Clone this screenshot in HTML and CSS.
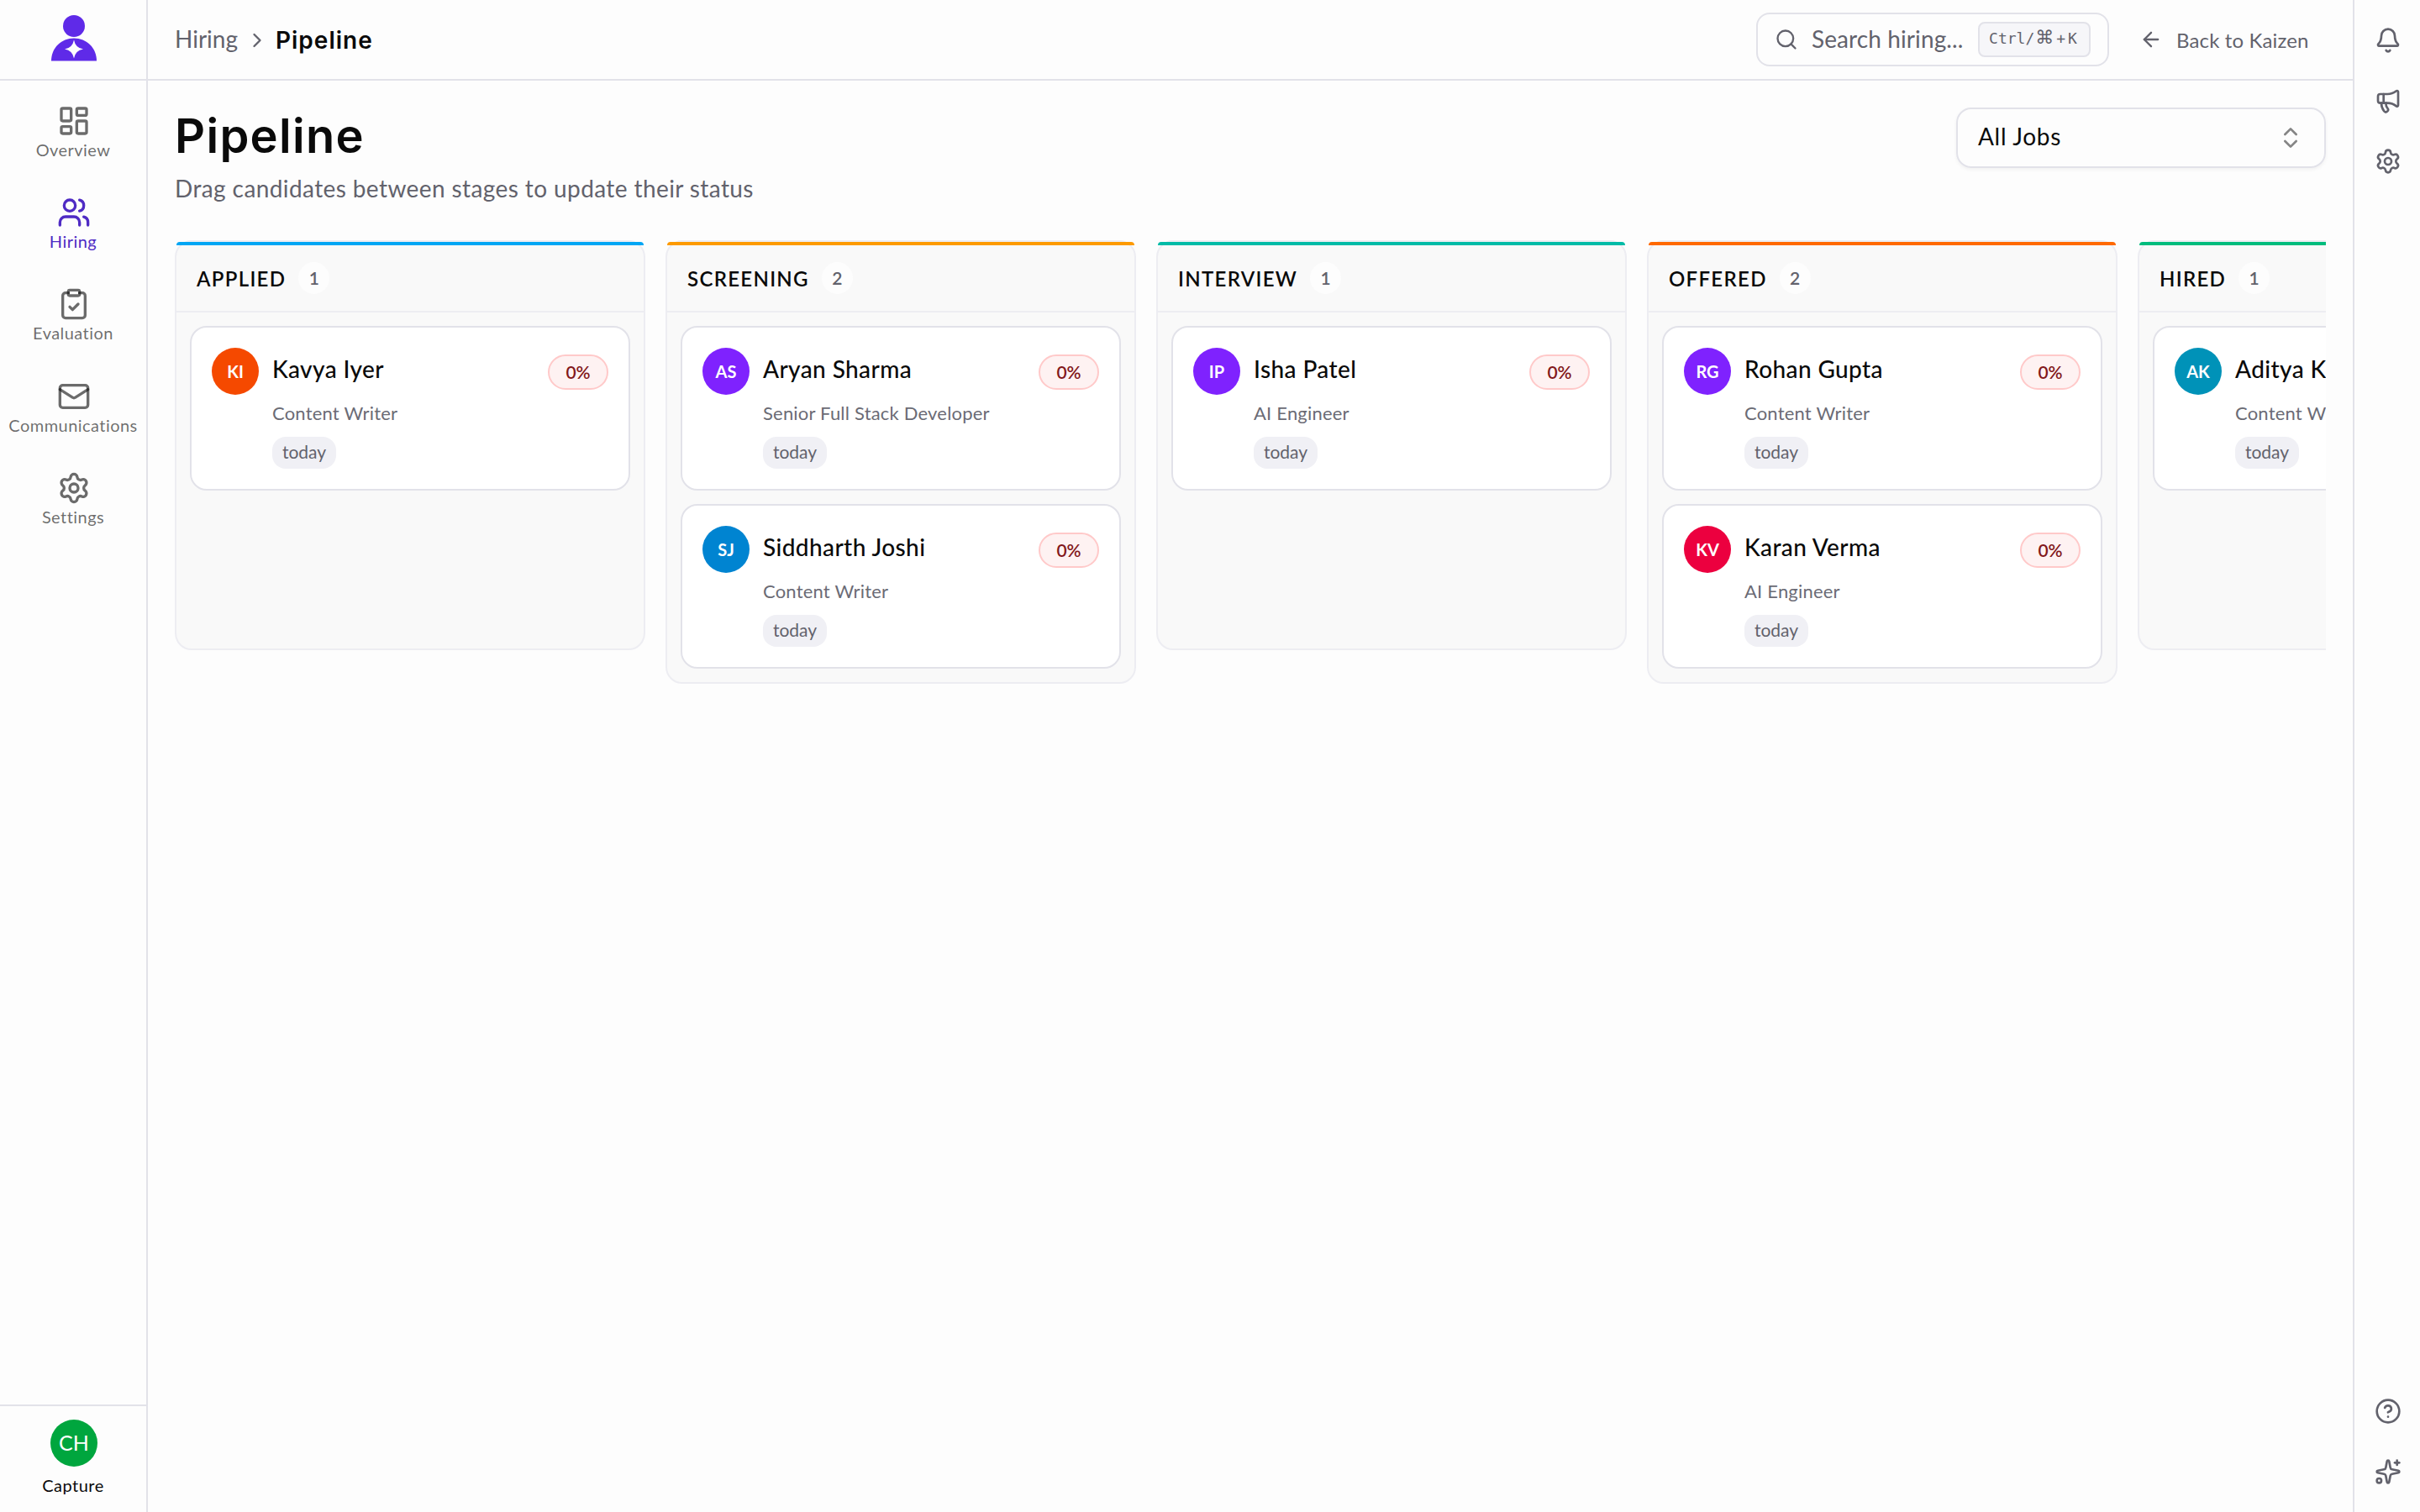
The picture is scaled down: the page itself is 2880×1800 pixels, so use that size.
FILE: index.html
```html
<!DOCTYPE html>
<html lang="en">
<head>
    <meta charset="UTF-8">
    <meta name="viewport" content="width=device-width, initial-scale=1.0">
    <title>Pipeline</title>
    <link rel="stylesheet" href="styles.css">
</head>
<body>
    <!-- Shared icons -->
    <svg class="icon-defs">
        <symbol id="settings" viewBox="0 0 24 24">
            <path d="M9.671 4.136a2.34 2.34 0 0 1 4.659 0 2.34 2.34 0 0 0 3.319 1.915 2.34 2.34 0 0 1 2.33 4.033 2.34 2.34 0 0 0 0 3.831 2.34 2.34 0 0 1-2.33 4.033 2.34 2.34 0 0 0-3.319 1.915 2.34 2.34 0 0 1-4.659 0 2.34 2.34 0 0 0-3.32-1.915 2.34 2.34 0 0 1-2.33-4.033 2.34 2.34 0 0 0 0-3.831A2.34 2.34 0 0 1 6.35 6.051a2.34 2.34 0 0 0 3.319-1.915"/>
            <circle cx="12" cy="12" r="3"/>
        </symbol>
    </svg>

    <div class="app">
        <aside class="sidebar">
            <div class="logo">
                <svg width="56" height="56" viewBox="0 0 56 56">
                    <circle cx="28" cy="14" r="13" fill="#5f2ae8"/>
                    <path d="M1 55.500C1 40 13 28.500 28 28.500S55 40 55 55.500Z" fill="#5f2ae8"/>
                    <path d="M28 30.500Q29.700 40 39 41.500Q29.700 43 28 52.500Q26.300 43 17 41.500Q26.300 40 28 30.500Z" fill="#fdfdfd"/>
                </svg>
            </div>
            <nav class="nav">
                <a class="nav-item">
                    <svg class="icon" viewBox="0 0 24 24"><rect width="7" height="9" x="3" y="3" rx="1"/><rect width="7" height="5" x="14" y="3" rx="1"/><rect width="7" height="9" x="14" y="12" rx="1"/><rect width="7" height="5" x="3" y="16" rx="1"/></svg>
                    <span>Overview</span>
                </a>
                <a class="nav-item active">
                    <svg class="icon" viewBox="0 0 24 24"><path d="M16 21v-2a4 4 0 0 0-4-4H6a4 4 0 0 0-4 4v2"/><circle cx="9" cy="7" r="4"/><path d="M22 21v-2a4 4 0 0 0-3-3.870"/><path d="M16 3.130a4 4 0 0 1 0 7.750"/></svg>
                    <span>Hiring</span>
                </a>
                <a class="nav-item">
                    <svg class="icon" viewBox="0 0 24 24"><rect width="8" height="4" x="8" y="2" rx="1"/><path d="M16 4h2a2 2 0 0 1 2 2v14a2 2 0 0 1-2 2H6a2 2 0 0 1-2-2V6a2 2 0 0 1 2-2h2"/><path d="m9 14 2 2 4-4"/></svg>
                    <span>Evaluation</span>
                </a>
                <a class="nav-item">
                    <svg class="icon" viewBox="0 0 24 24"><rect width="20" height="16" x="2" y="4" rx="2"/><path d="m22 7-8.970 5.700a1.940 1.940 0 0 1-2.060 0L2 7"/></svg>
                    <span>Communications</span>
                </a>
                <a class="nav-item">
                    <svg class="icon"><use href="#settings"/></svg>
                    <span>Settings</span>
                </a>
            </nav>
            <div class="account">
                <div class="account-avatar">CH</div>
                <span>Capture</span>
            </div>
        </aside>

        <div class="content">
            <header class="topbar">
                <div class="breadcrumb">
                    <span class="crumb">Hiring</span>
                    <svg class="icon crumb-arrow" viewBox="0 0 24 24"><path d="m9 18 6-6-6-6"/></svg>
                    <span class="crumb-current">Pipeline</span>
                </div>
                <div class="search">
                    <svg class="icon" viewBox="0 0 24 24"><circle cx="11" cy="11" r="8"/><path d="m21 21-4.340-4.340"/></svg>
                    <span class="search-text">Search hiring...</span>
                    <kbd><span>Ctrl/</span><span class="cmd">⌘</span><span class="plus-k">+K</span></kbd>
                </div>
                <a class="back-link">
                    <svg class="icon" viewBox="0 0 24 24"><path d="m12 19-7-7 7-7"/><path d="M19 12H5"/></svg>
                    <span>Back to Kaizen</span>
                </a>
            </header>

            <main class="main">
                <div class="page-header">
                    <div>
                        <h1>Pipeline</h1>
                        <p>Drag candidates between stages to update their status</p>
                    </div>
                    <div class="select">
                        <span>All Jobs</span>
                        <svg class="icon" viewBox="0 0 24 24"><path d="m7 15 5 5 5-5"/><path d="m7 9 5-5 5 5"/></svg>
                    </div>
                </div>

                <div class="board">
                    <section class="column">
                        <div class="bar sky"></div>
                        <div class="column-header"><h2>APPLIED</h2><span class="count">1</span></div>
                        <div class="column-body">
                            <div class="card">
                                <div class="avatar orange">KI</div>
                                <div class="info">
                                    <div class="info-top"><span class="name">Kavya Iyer</span><span class="score">0%</span></div>
                                    <div class="role">Content Writer</div>
                                    <span class="tag">today</span>
                                </div>
                            </div>
                        </div>
                    </section>

                    <section class="column">
                        <div class="bar amber"></div>
                        <div class="column-header"><h2>SCREENING</h2><span class="count">2</span></div>
                        <div class="column-body">
                            <div class="card">
                                <div class="avatar violet">AS</div>
                                <div class="info">
                                    <div class="info-top"><span class="name">Aryan Sharma</span><span class="score">0%</span></div>
                                    <div class="role">Senior Full Stack Developer</div>
                                    <span class="tag">today</span>
                                </div>
                            </div>
                            <div class="card">
                                <div class="avatar blue">SJ</div>
                                <div class="info">
                                    <div class="info-top"><span class="name">Siddharth Joshi</span><span class="score">0%</span></div>
                                    <div class="role">Content Writer</div>
                                    <span class="tag">today</span>
                                </div>
                            </div>
                        </div>
                    </section>

                    <section class="column">
                        <div class="bar teal"></div>
                        <div class="column-header"><h2>INTERVIEW</h2><span class="count">1</span></div>
                        <div class="column-body">
                            <div class="card">
                                <div class="avatar violet">IP</div>
                                <div class="info">
                                    <div class="info-top"><span class="name">Isha Patel</span><span class="score">0%</span></div>
                                    <div class="role">AI Engineer</div>
                                    <span class="tag">today</span>
                                </div>
                            </div>
                        </div>
                    </section>

                    <section class="column">
                        <div class="bar deep-orange"></div>
                        <div class="column-header"><h2>OFFERED</h2><span class="count">2</span></div>
                        <div class="column-body">
                            <div class="card">
                                <div class="avatar violet">RG</div>
                                <div class="info">
                                    <div class="info-top"><span class="name">Rohan Gupta</span><span class="score">0%</span></div>
                                    <div class="role">Content Writer</div>
                                    <span class="tag">today</span>
                                </div>
                            </div>
                            <div class="card">
                                <div class="avatar rose">KV</div>
                                <div class="info">
                                    <div class="info-top"><span class="name">Karan Verma</span><span class="score">0%</span></div>
                                    <div class="role">AI Engineer</div>
                                    <span class="tag">today</span>
                                </div>
                            </div>
                        </div>
                    </section>

                    <section class="column">
                        <div class="bar green"></div>
                        <div class="column-header"><h2>HIRED</h2><span class="count">1</span></div>
                        <div class="column-body">
                            <div class="card">
                                <div class="avatar cyan">AK</div>
                                <div class="info">
                                    <div class="info-top"><span class="name">Aditya Kumar</span><span class="score">0%</span></div>
                                    <div class="role">Content Writer</div>
                                    <span class="tag">today</span>
                                </div>
                            </div>
                        </div>
                    </section>
                </div>
            </main>
        </div>

        <aside class="rail">
            <div class="rail-group">
                <svg class="icon" viewBox="0 0 24 24"><path d="M10.268 21a2 2 0 0 0 3.464 0"/><path d="M3.262 15.326A1 1 0 0 0 4 17h16a1 1 0 0 0 .740-1.673C19.410 13.956 18 12.499 18 8A6 6 0 0 0 6 8c0 4.499-1.411 5.956-2.738 7.326"/></svg>
                <svg class="icon" viewBox="0 0 24 24"><path d="M11 6a13 13 0 0 0 8.400-2.800A1 1 0 0 1 21 4v12a1 1 0 0 1-1.600.800A13 13 0 0 0 11 14H5a2 2 0 0 1-2-2V8a2 2 0 0 1 2-2z"/><path d="M6 14a12 12 0 0 0 2.400 7.200 2 2 0 0 0 3.200-2.400A8 8 0 0 1 10 14"/><path d="M8 6v8"/></svg>
                <svg class="icon"><use href="#settings"/></svg>
            </div>
            <div class="rail-group">
                <svg class="icon" viewBox="0 0 24 24"><circle cx="12" cy="12" r="10"/><path d="M9.090 9a3 3 0 0 1 5.830 1c0 2-3 3-3 3"/><path d="M12 17h.010"/></svg>
                <svg class="icon" viewBox="0 0 24 24"><path d="M11.017 2.814a1 1 0 0 1 1.966 0l1.051 5.558a2 2 0 0 0 1.594 1.594l5.558 1.051a1 1 0 0 1 0 1.966l-5.558 1.051a2 2 0 0 0-1.594 1.594l-1.051 5.558a1 1 0 0 1-1.966 0l-1.051-5.558a2 2 0 0 0-1.594-1.594l-5.558-1.051a1 1 0 0 1 0-1.966l5.558-1.051a2 2 0 0 0 1.594-1.594z"/><path d="M20 2v4"/><path d="M22 4h-4"/><circle cx="4" cy="20" r="2"/></svg>
            </div>
        </aside>
    </div>
</body>
</html>
```
FILE: styles.css
```css
* {
    box-sizing: border-box;
}

body {
    margin: 0;
    font-family: Lato, 'Open Sans', sans-serif;
    font-size: 28px;
    color: #0a0a0a;
    background: #fdfdfd;
}

.icon-defs {
    display: none;
}

.icon {
    flex: none;
    width: 32px;
    height: 32px;
    fill: none;
    stroke: currentColor;
    stroke-width: 2;
    stroke-linecap: round;
    stroke-linejoin: round;
}

.app {
    display: flex;
    height: 1800px;
    overflow: hidden;
}

/* Sidebar */
.sidebar {
    width: 176px;
    flex: none;
    display: flex;
    flex-direction: column;
    border-right: 2px solid #e2e2e9;
}

.logo {
    height: 96px;
    padding: 17px 0 0 60px;
    border-bottom: 2px solid #e2e2e9;
}

.logo svg {
    display: block;
}

.nav {
    flex: 1;
    display: flex;
    flex-direction: column;
    gap: 41.2px;
    padding: 28px 0 0 2px;
}

.nav-item {
    display: flex;
    flex-direction: column;
    align-items: center;
    height: 68px;
    font-size: 20px;
    line-height: 29px;
    letter-spacing: 0.45px;
    color: rgba(10, 10, 10, 0.6);
}

.nav-item span {
    margin-left: -2px;
}

.nav-item .icon {
    width: 40px;
    height: 40px;
}

.nav-item.active {
    color: #4f2bc4;
}

.account {
    height: 128px;
    border-top: 2px solid #e2e2e9;
    padding-top: 16px;
    display: flex;
    flex-direction: column;
    align-items: center;
    font-size: 20px;
    letter-spacing: 0.5px;
    line-height: 28px;
}

.account-avatar {
    width: 56px;
    height: 56px;
    margin-left: 2px;
    margin-bottom: 8px;
    border-radius: 50%;
    background: #00a63e;
    color: white;
    font-size: 25px;
    letter-spacing: 0;
    line-height: 54px;
    text-align: center;
}

/* Top bar */
.content {
    flex: 1;
    min-width: 0;
}

.topbar {
    height: 96px;
    border-bottom: 2px solid #e2e2e9;
    padding: 0 52px 0 32px;
    display: flex;
    align-items: center;
    color: #62626c;
}

.breadcrumb {
    flex: 1;
    display: flex;
    align-items: center;
}

.crumb {
    padding-bottom: 3px;
}

.crumb-arrow {
    width: 28px;
    height: 28px;
    margin: 2px 8px 0 9px;
}

.crumb-current {
    padding-top: 2px;
    font-family: Inter, sans-serif;
    font-weight: 600;
    letter-spacing: 1px;
    color: #0a0a0a;
}

.search {
    width: 420px;
    height: 64px;
    border: 2px solid #e2e2e9;
    border-radius: 16px;
    padding: 0 20px;
    display: flex;
    align-items: center;
}

.search .icon {
    width: 28px;
    height: 28px;
}

.search-text {
    flex: 1;
    margin-left: 16px;
    padding-bottom: 3px;
    letter-spacing: 0.1px;
    white-space: nowrap;
}

kbd {
    width: 134px;
    height: 42px;
    border: 2px solid #e2e2e9;
    border-radius: 8px;
    background: #f6f6f9;
    display: flex;
    align-items: center;
    justify-content: center;
    padding-bottom: 4px;
    font-family: 'DejaVu Sans Mono', monospace;
    font-size: 18px;
}

.cmd {
    width: 24px;
    font-family: 'DejaVu Sans', sans-serif;
    font-size: 22px;
    line-height: 22px;
    text-align: center;
}

.plus-k {
    letter-spacing: 3px;
    margin-left: 2px;
}

.back-link {
    display: flex;
    align-items: center;
    gap: 16px;
    width: 202px;
    margin-left: 36px;
    font-size: 24px;
    letter-spacing: 0.15px;
    white-space: nowrap;
}

.back-link .icon {
    width: 28px;
    height: 28px;
}

/* Page header */
.main {
    padding: 32px 32px 0;
}

.page-header {
    display: flex;
    justify-content: space-between;
    align-items: flex-start;
    height: 158px;
}

h1 {
    margin: 0;
    font-family: Inter, sans-serif;
    font-size: 56px;
    font-weight: 600;
    line-height: 68px;
    letter-spacing: 1.3px;
}

.page-header p {
    margin: 8px 0 0;
    line-height: 40px;
    letter-spacing: 0.4px;
    color: #62626c;
}

.select {
    width: 440px;
    height: 72px;
    border: 2px solid #e2e2e9;
    border-radius: 18px;
    box-shadow: 0 2px 4px rgba(0, 0, 0, 0.05);
    padding: 0 24px;
    display: flex;
    justify-content: space-between;
    align-items: center;
}

.select span {
    padding-bottom: 4px;
    letter-spacing: 0.7px;
}

.select .icon {
    width: 32px;
    height: 32px;
    color: #858585;
}

/* Board */
.board {
    display: flex;
    align-items: flex-start;
    gap: 24px;
    overflow: hidden;
}

.column {
    flex: none;
    width: 560px;
    border: 2px solid #ededf2;
    border-radius: 20px;
    background: #f9f9f9;
}

.bar {
    height: 4px;
    border-radius: 4px 4px 0 0;
}

.sky { background: #00a6f4; }
.amber { background: #fd9a00; }
.teal { background: #00bba7; }
.deep-orange { background: #ff6900; }
.green { background: #00bc7d; }

.column-header {
    height: 80px;
    padding: 0 24px;
    border-bottom: 2px solid #ededf2;
    display: flex;
    align-items: center;
    gap: 15px;
}

h2 {
    margin: 0;
    font-size: 24px;
    font-weight: 600;
    letter-spacing: 1.3px;
}

.count {
    min-width: 37px;
    height: 38px;
    border-radius: 19px;
    background: #fdfdfd;
    color: #62626c;
    font-size: 21px;
    font-weight: 600;
    line-height: 37px;
    text-align: center;
}

.column-body {
    min-height: 400px;
    padding: 16px;
    display: flex;
    flex-direction: column;
    gap: 16px;
}

.card {
    display: flex;
    gap: 16px;
    height: 196px;
    padding: 24px;
    border: 2px solid #e2e2e9;
    border-radius: 20px;
    background: white;
}

.avatar {
    flex: none;
    width: 56px;
    height: 56px;
    border-radius: 50%;
    color: white;
    font-size: 20px;
    font-weight: 700;
    line-height: 56px;
    text-align: center;
}

.orange { background: #f54900; }
.violet { background: #7f22fe; }
.blue { background: #0084d1; }
.rose { background: #ec003f; }
.cyan { background: #0092b8; }

.info {
    flex: 1;
    padding-top: 8px;
}

.info-top {
    display: flex;
    justify-content: space-between;
    height: 42px;
}

.name {
    font-weight: 500;
    line-height: 35px;
    letter-spacing: 0.4px;
    white-space: nowrap;
}

.score {
    width: 72px;
    height: 42px;
    border: 2px solid #ffc9c9;
    border-radius: 21px;
    background: #fef2f2;
    color: #82181a;
    font-size: 21px;
    font-weight: 600;
    line-height: 38px;
    text-align: center;
}

.role {
    margin-top: 12px;
    font-size: 22px;
    line-height: 32px;
    letter-spacing: 0.2px;
    color: #6b6b75;
}

.tag {
    display: block;
    width: 76px;
    height: 38px;
    margin-top: 12px;
    border-radius: 16px;
    background: #f0f0f5;
    color: #62626c;
    font-size: 21px;
    line-height: 36px;
    text-align: center;
}

/* Right rail */
.rail {
    flex: none;
    width: 80px;
    border-left: 2px solid #e2e2e9;
    padding: 32px 0 32px 24px;
    display: flex;
    flex-direction: column;
    justify-content: space-between;
    color: #62626c;
}

.rail-group {
    display: flex;
    flex-direction: column;
    gap: 40px;
}
```
